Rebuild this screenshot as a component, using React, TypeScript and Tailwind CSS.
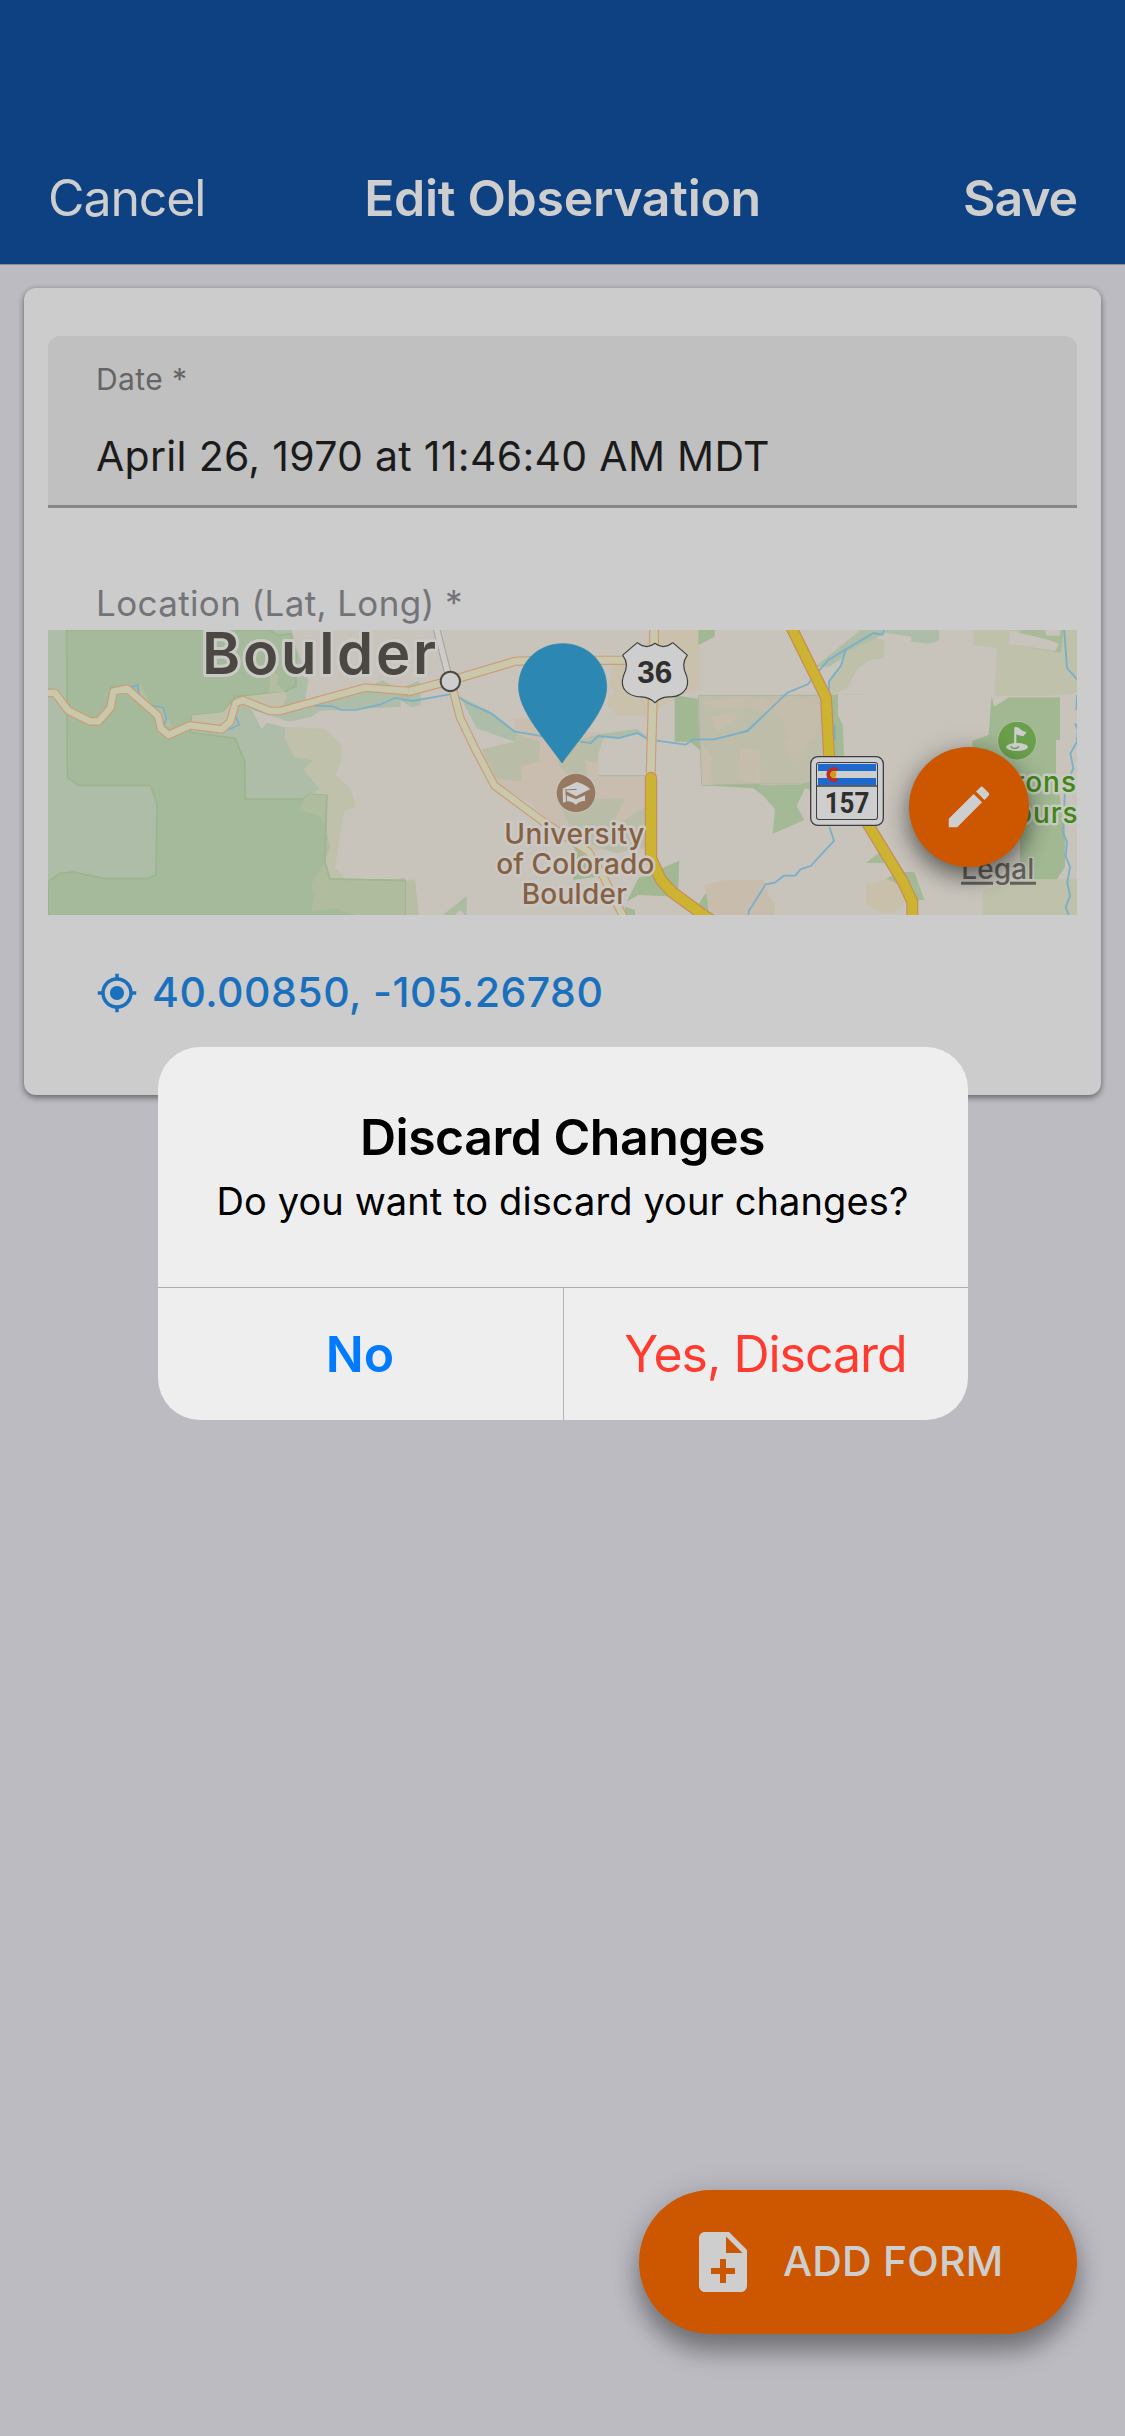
import { MdEdit, MdMyLocation, MdNoteAdd } from "react-icons/md";

const ROAD_EDGE = "#cc9c75";
const ROAD_FILL = "#c9c8ad";
const HWY_EDGE = "#c98a5c";
const HWY_FILL = "#ccb432";
const WATER = "#7aafc9";

function Road({ d, w = 26, edge = ROAD_EDGE, fill = ROAD_FILL }: { d: string; w?: number; edge?: string; fill?: string }) {
  return (
    <g fill="none" strokeLinejoin="round">
      <path d={d} stroke={edge} strokeWidth={w} />
      <path d={d} stroke={fill} strokeWidth={w - 7} />
    </g>
  );
}

function WestMap() {
  return (
    <g transform="translate(-24 -210)">
      <path d="M24 210H900V1064H24Z" fill="#adbda7" />
      <path d="M755 210H1082V383L980 388 795 422 805 360 770 265Z" fill="#c8c4bc" />
      <path d="M960 390 1028 361 1060 378V395Z" fill="#adbda7" />
      <path d="M795 422 980 385 1082 398V448L840 452 815 470 745 485 735 500 680 488 633 445 600 420Z" fill="#adbda7" />
      <path d="M633 445 745 485 815 470 840 452 1082 440V962L915 955 885 927 850 706 735 502 680 488 665 507Z" fill="#c8c4bc" />
      <path d="M735 502 665 520 700 700 838 686 870 590 800 504Z" fill="#adbda7" />
      <path d="M735 502 855 507 905 555V600L887 645 930 685 950 740 913 752 885 927 915 955 868 957 855 910 860 706 810 703 838 686 790 628 818 602 765 592 735 540Z" fill="#c0c1ab" />
      <path d="M80 210H690L712 226 752 222 768 280V378L735 395 625 406 585 410 548 457 457 466 450 517 585 535 614 603 616 717H790L810 703 860 706 855 910 870 957 1095 962V1066H24V965L60 940 100 936 195 956H320L348 945 351 730 331 676H115L82 652Z" fill="#a5ba9b" stroke="#9bb58d" strokeWidth="5" />
      <path d="M860 706 810 703 790 717 780 752 835 765 855 790 870 862 855 905 812 975 825 1005 812 1055 890 1045 950 1066H1095V962L870 957 855 910Z" fill="#b0bc9e" />
      <path d="M860 706 855 910 870 957 1095 962" fill="none" stroke="#9fb68e" strokeWidth="5" />
      <path d="M457 466 548 457 590 412 735 395 740 410 725 450 600 430 570 500 455 490Z" fill="#c1c1ab" />
      <path d="M700 335 718 350 710 368 735 395 688 398 690 345ZM300 368 330 430 370 445 400 505 370 498 345 440 295 405Z" fill="#b3bd9f" />
      <g fill="none" stroke={WATER} strokeWidth="5">
        <path d="M24 388 50 392M205 440 215 383 250 384M268 384 294 375 297 405M330 435 369 443 379 475 371 500M582 460 598 494 565 509M640 447 690 463M820 437 880 439 903 450 947 450 1020 434 1064 414 1082 416" />
      </g>
      <Road d="M10 398 45 399 85 452 150 484 176 484 211 444 221 394 261 386 353 466 363 506 386 525 450 496 545 508 570 486 587 429 608 420 690 453 720 453 975 383 1105 393" />
    </g>
  );
}

function CentreMap() {
  return (
    <g transform="translate(1056 -30)">
      <path d="M0 240V205L55 183 62 195 45 210 62 225V255L35 262Z" fill="#adbda7" />
      <path d="M640 140 700 100 777 30H899V210L845 222 742 287H650L624 256V226L645 224 628 187Z" fill="#c9c1ac" />
      <path d="M895 30H944V50L895 76ZM824 226 893 236 900 390 870 365H824Z" fill="#a1b893" />
      <path d="M895 226H1400V492H1080L905 496Z" fill="#bebda9" stroke="#aeb49f" strokeWidth="3" />
      <path d="M905 245 1030 230 1130 240 1190 290 1110 275 1050 262 940 262ZM935 290 1010 275 1010 300 950 335ZM905 370 935 410 935 495H905ZM1020 380 1080 395V490L1020 480Z" fill="#c8bdac" opacity=".8" />
      <path d="M905 496 1080 493 1100 535 1060 505Z" fill="#a1b893" />
      <path d="M343 296 430 295 560 335 617 338 596 400V467H735V690L560 690 440 600 385 545 275 495 245 388 345 365Z" fill="#c8bdae" />
      <path d="M245 388 345 365 360 345 420 365 418 425 362 438 365 485 290 475ZM475 435 490 370 617 340 596 400 592 430 555 420 560 470 500 460ZM470 540 675 535 630 630 735 560V680L650 700 530 660 490 580Z" fill="#b9bda7" />
      <path d="M617 340 596 400V467H735V370L712 345 656 356Z" fill="#c8c4bc" />
      <path d="M596 467H735" stroke="#a9ba9e" strokeWidth="4" />
      <path d="M180 230 275 276 354 340 345 365 230 325ZM560 355 620 340 710 327 742 350 715 340 650 350Z" fill="#adbda7" />
      <path d="M680 845 715 775 838 722 835 800 830 830 715 825ZM525 680 570 720 590 770 520 780ZM675 860 705 870V890H675ZM890 860 920 815 928 890Z" fill="#a1b893" />
      <path d="M135 880 200 828V890L180 870 160 890H130ZM0 775H15V890H0Z" fill="#adbc9f" />
      <path d="M15 782 45 778 58 890H15Z" fill="#b8bea5" />
      <path d="M913 795 970 781H1092L1126 890H935Z" fill="#c8bdad" />
      <path d="M0 237 38 243 160 221 203 249 273 280 343 334 430 349M540 365 573 369 594 348 656 354 712 339 742 356M770 362 857 374 880 358 943 358 1043 333 1082 295M1046 890V871L1082 815" fill="none" stroke={WATER} strokeWidth="5.5" />
      <path d="M108 20 150 185" stroke="#a9a49e" strokeWidth="23" />
      <path d="M108 20 150 185" stroke="#cecccb" strokeWidth="16" />
      <Road d="M-5 215 25 215 150 182 345 124 420 121H680" w={28} />
      <Road d="M158 205 180 292 225 386 284 497 430 605 565 695 610 770 670 890" />
      <Road d="M762 20V110L752 460" w={30} />
      <g strokeLinecap="round">
        <Road d="M753 474V715L783 780 815 815 910 885 980 930" w={37} edge={HWY_EDGE} fill={HWY_FILL} />
      </g>
      <circle cx="151" cy="184" r="29" fill="#cecece" stroke="#4c4a46" strokeWidth="6" />
    </g>
  );
}

function EastMap() {
  return (
    <g transform="translate(2076 -30)">
      <path d="M362 30H598L597 60 570 71 514 65V50L435 38 400 60 265 140 225 140Z" fill="#adbda7" />
      <path d="M318 95 410 55 435 60 430 115 390 120 352 147 320 208 270 225 265 185 300 140Z" fill="#bec0aa" />
      <path d="M268 225H400V500H268Z" fill="#c8c4bc" />
      <path d="M700 30H1011V220L920 228H763L770 84 700 75Z" fill="#bfc1ab" />
      <path d="M840 30H972L962 98 830 75Z" fill="#a8ba97" />
      <path d="M810 32 920 58 958 72 945 93 808 72ZM913 30H960V47H920Z" fill="#c8c4bc" />
      <path d="M275 225 294 222V285L308 315 312 407H275Z" fill="#a4b995" />
      <path d="M0 497 180 494 207 485 215 510 195 505 170 558 193 600 98 642 105 568 52 506ZM378 728 420 697 450 730ZM440 775 480 756H523L553 840H530Z" fill="#a4b995" />
      <path d="M378 795 440 776 490 800 500 850 460 880 430 878 378 856Z" fill="#c9c0ab" />
      <path d="M0 780H70L72 810 105 850V890H0Z" fill="#c8bdad" />
      <path d="M0 420 65 418 45 480 0 488ZM0 235H55V262H0ZM75 240 150 232 225 230 240 260 232 330 165 430 130 370 145 350 128 295 70 262Z" fill="#c5bdab" />
      <path d="M755 226 762 260 808 232H960V360H948V455L975 640V740L950 780 840 778V620L697 560V362L746 345Z" fill="#a2b893" />
      <path d="M728 810 840 778H1011V890H728Z" fill="#bfc1ab" />
      <path d="M0 338 22 333 142 218 203 193 265 120 400 39 427 44 432 30M317 90 303 137 267 184V230M284 315 285 360M268 620 282 662 212 738 181 748 166 767H131L105 788 77 793 26 874V890M972 20 981 144 1015 182M1011 225 1009 270M1006 310 1013 330 1011 365 991 401 1000 445 975 500 970 640 981 665 977 710 990 740 982 788 990 828 977 862 990 895" fill="none" stroke={WATER} strokeWidth="5.5" />
      <Road d="M148 10 258 232 268 420" w={36} edge={HWY_EDGE} fill={HWY_FILL} />
      <Road d="M370 590 486 780 517 845V900" w={36} edge={HWY_EDGE} fill={HWY_FILL} />
    </g>
  );
}

function MapLabels() {
  return (
    <g fontFamily="Inter, sans-serif" strokeLinejoin="round" style={{ paintOrder: "stroke" }}>
      <text x="462" y="132" fontSize="174" fontWeight="600" fill="#4b4843" stroke="#cccac6" strokeWidth="18" textLength="702">Boulder</text>

      <g transform="translate(1056 -30)">
        <path d="M488 71C415 71 356 126 356 201C356 272 430 350 486 429C542 350 620 272 620 201C620 126 561 71 488 71Z" fill="#2c88b3" stroke="#257ba2" strokeWidth="2" />
        <circle cx="528" cy="519" r="58" fill="#967960" stroke="#cbc7bf" strokeWidth="4" />
        <g fill="#cecece">
          <path d="M486 507 530 486Q550 491 571 507L528 529Z" />
          <path d="M500 526 528 538 555 526V543Q540 542 528 554Q515 541 501 544ZM488 510H496L498 545 489 548Z" />
        </g>
        <path d="M494 510 530 508" stroke="#967960" strokeWidth="3" />
        <g fontSize="84" fontWeight="500" fill="#87603f" stroke="#cbc9c7" strokeWidth="15">
          <text x="313" y="672" textLength="420">University</text>
          <text x="289" y="762" textLength="474">of Colorado</text>
          <text x="365" y="852" textLength="316">Boulder</text>
        </g>
        <path d="M712 70Q740 92 765 72Q791 92 818 70L860 106Q840 132 858 168C872 212 836 230 805 229Q778 231 765 246Q751 231 724 229C688 228 659 208 672 168Q691 132 670 106Z" fill="#cecece" stroke="#3c3c3c" strokeWidth="7" />
        <text x="712" y="188" fontSize="94" fontWeight="700" fill="#2f2f2f" fontFamily="Liberation Sans, sans-serif" textLength="105" lengthAdjust="spacingAndGlyphs">36</text>
      </g>

      <g transform="translate(2076 -30)">
        <rect x="214" y="412" width="214" height="202" rx="20" fill="#cecece" stroke="#3d3e40" strokeWidth="8" />
        <rect x="231" y="429" width="180" height="168" rx="6" fill="#cecece" stroke="#3d3e40" strokeWidth="6" />
        <path d="M234 432H408V496H234Z" fill="#1d69ce" />
        <path d="M234 453H408V474H234Z" fill="#cecece" />
        <path d="M231 498H411" stroke="#3d3e40" strokeWidth="5" />
        <circle cx="278" cy="463" r="11" fill="#d09b18" />
        <path d="M292 450A17 17 0 1 0 292 477" fill="none" stroke="#bd2a28" strokeWidth="11" />
        <text x="254" y="579" fontSize="88" fontWeight="700" fill="#2f2f2f" fontFamily="Roboto, sans-serif" textLength="134" lengthAdjust="spacingAndGlyphs">157</text>
        <circle cx="831" cy="362" r="57" fill="#6a9f4c" stroke="#c4cbbf" strokeWidth="3" />
        <ellipse cx="831" cy="381" rx="33" ry="12" fill="#cecece" />
        <path d="M823 322Q833 319 841 328Q850 337 860 336L850 349Q838 348 829 343V385H822Z" fill="#cecece" />
        <path d="M814 378Q812 385 825 385Q836 384 836 379" fill="none" stroke="#6a9f4c" strokeWidth="4" />
        <g fontSize="84" fontWeight="500" fill="#438519" stroke="#c7ccc0" strokeWidth="15">
          <text x="1011" y="517" textAnchor="end" letterSpacing="3">arons</text>
          <text x="1016" y="608" textAnchor="end" letterSpacing="3">Cours</text>
        </g>
        <text x="664" y="777" fontSize="84" fontWeight="500" fill="#63615c" stroke="#c5c4bd" strokeWidth="8" textLength="219">Legal</text>
        <path d="M663 790H759M810 790H888" stroke="#63615c" strokeWidth="9" />
      </g>
    </g>
  );
}

function LocationMap() {
  return (
    <svg viewBox="0 0 3087 855" className="block h-[285px] w-full overflow-hidden">
      <rect width="3087" height="855" fill="#c8c4bc" />
      <CentreMap />
      <EastMap />
      <WestMap />
      <MapLabels />
    </svg>
  );
}

function Header() {
  return (
    <header className="flex h-[265px] items-end border-b border-[#8b8b93] bg-[#0e4182] text-[50px] text-[#cecece]">
      <div className="grid h-[132px] w-full grid-cols-[1fr_auto_1fr] items-center px-12 whitespace-nowrap">
        <button className="text-left tracking-[-1.1px]">Cancel</button>
        <h1 className="text-center font-semibold tracking-[-0.3px]">Edit Observation</h1>
        <button className="text-right font-semibold tracking-[-1.1px]">Save</button>
      </div>
    </header>
  );
}

function ObservationCard() {
  return (
    <section className="mx-6 mt-[23px] h-[807px] rounded-xl bg-[#cccccc] px-6 pt-12 shadow-[0_3px_6px_rgba(0,0,0,0.38),0_0_5px_rgba(0,0,0,0.15)]">
      <div className="h-[172px] rounded-t-xl border-b-[3px] border-[#868887] bg-[#c0c0c0] px-12 pt-[23px] whitespace-nowrap">
        <div className="text-[30px] leading-10 tracking-[0.4px] text-[#656565]">Date *</div>
        <div className="mt-[27px] text-[41px] leading-[60px] tracking-[0.3px] text-[#1b1b1b]">April 26, 1970 at 11:46:40 AM MDT</div>
      </div>
      <div className="mt-[75px] px-12 text-[35px] leading-10 tracking-[0.36px] text-[#747478]">Location (Lat, Long) *</div>
      <div className="relative mt-[7px]">
        <LocationMap />
        <button className="absolute top-[117px] right-12 flex size-[120px] items-center justify-center rounded-full bg-[#cc5700] text-[#cecece] shadow-[0_10px_22px_rgba(0,0,0,0.45),0_2px_30px_rgba(0,0,0,0.14)]">
          <MdEdit className="size-[54px]" />
        </button>
      </div>
      <button className="mt-12 ml-12 flex h-[60px] items-center text-[41px] font-medium tracking-[0.5px] text-[#1a70bc]">
        <MdMyLocation className="size-[42px]" />
        <span className="ml-3.5">40.00850, -105.26780</span>
      </button>
    </section>
  );
}

function DiscardDialog() {
  return (
    <div className="absolute inset-x-0 top-[1047px] flex justify-center">
      <div role="alertdialog" className="flex h-[373px] w-[810px] flex-col overflow-hidden rounded-[42px] bg-[#eeeeef] text-center whitespace-nowrap">
        <div className="h-[241px] border-b border-[#aeaeb3] pt-[60px] text-black">
          <h2 className="text-[50px] leading-[60px] font-semibold tracking-[-0.5px]">Discard Changes</h2>
          <p className="mt-[9px] text-[38px] leading-[50px] tracking-[0.1px]">Do you want to discard your changes?</p>
        </div>
        <div className="grid flex-1 grid-cols-[405px_1px_1fr] text-[50px]">
          <button className="font-semibold text-[#007aff]">No</button>
          <div className="bg-[#b4b4b8]" />
          <button className="tracking-[-1px] text-[#ff3b30]">Yes, Discard</button>
        </div>
      </div>
    </div>
  );
}

export default function App() {
  return (
    <main className="relative flex h-[2436px] w-[1125px] flex-col overflow-hidden bg-[#bcbbc2] font-['Inter',sans-serif]">
      <Header />
      <ObservationCard />
      <button className="mt-auto mr-12 mb-[102px] flex h-36 w-[438px] items-center self-end rounded-full bg-[#cc5700] pl-12 text-[41px] font-medium tracking-[0.2px] whitespace-nowrap text-[#cecece] shadow-[0_18px_24px_rgba(0,0,0,0.34),0_2px_32px_rgba(0,0,0,0.14)]">
        <MdNoteAdd className="size-[72px]" />
        <span className="ml-6">ADD FORM</span>
      </button>
      <DiscardDialog />
    </main>
  );
}
